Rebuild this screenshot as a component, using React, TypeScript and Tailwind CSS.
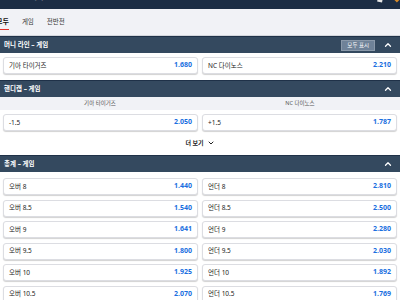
import { ChevronUp, ChevronDown } from 'lucide-react';

const font = { fontFamily: '"Noto Sans", "Noto Sans CJK KR", sans-serif' };

const OddCard = ({ label, odd }: { label: string; odd: string }) => (
  <div className="flex h-[17px] flex-1 items-center justify-between rounded-[3px] border border-[#dcdde2] bg-white px-[5px] shadow-[0_1px_1px_rgba(0,0,0,0.18)]">
    <span className="text-[6.5px] text-[#222]">{label}</span>
    <span className="text-[7px] font-bold text-[#1a6fe0]">{odd}</span>
  </div>
);

const SectionHeader = ({ title, showAll }: { title: string; showAll?: boolean }) => (
  <div className="flex h-[17px] items-center justify-between border-t border-[#1f3148] bg-[#34495f] pl-[4px] pr-[7px]">
    <span className="text-[6.5px] font-bold text-white">{title}</span>
    <div className="flex items-center gap-[8px]">
      {showAll && (
        <span className="flex h-[11px] items-center border border-[#8a99aa] bg-[#6f8298] px-[5px] text-[5.5px] text-white">
          모두 표시
        </span>
      )}
      <ChevronUp size={10} strokeWidth={3} className="text-white" />
    </div>
  </div>
);

const totals = [
  ['오버 8', '1.440', '언더 8', '2.810'],
  ['오버 8.5', '1.540', '언더 8.5', '2.500'],
  ['오버 9', '1.641', '언더 9', '2.280'],
  ['오버 9.5', '1.800', '언더 9.5', '2.030'],
  ['오버 10', '1.925', '언더 10', '1.892'],
  ['오버 10.5', '2.070', '언더 10.5', '1.769'],
];

export default function App() {
  return (
    <div className="h-[300px] w-[400px] overflow-hidden bg-white" style={font}>
      {/* top bar, scrolled partly out of view */}
      <div className="-mt-[14px] flex h-[23px] items-center justify-between bg-[#1c2d45] pl-[8px] pr-[2px]">
        <span className="text-[7px] font-bold text-white">☆ &nbsp;NC 다이노스</span>
        <div className="flex items-center gap-[10px]">
          <div className="h-[9px] w-[5px] rotate-12 bg-[#e6e6e6]" />
          <div className="h-[9px] w-[5px] -rotate-45 bg-[#d58a2a]" />
        </div>
      </div>

      {/* tabs */}
      <div className="flex h-[27px] items-center gap-[13px] border-b border-[#d3d6dc] bg-[#f1f2f6] -ml-[4px]">
        <div className="relative flex h-full items-center">
          <span className="text-[7px] font-bold text-[#111]">모두</span>
          <div className="absolute bottom-[5px] left-0 h-[1.5px] w-full bg-[#e2302a]" />
        </div>
        <span className="text-[6.5px] text-[#333]">게임</span>
        <span className="text-[6.5px] text-[#333]">전반전</span>
      </div>

      <SectionHeader title="머니 라인 – 게임" showAll />
      <div className="flex gap-[4px] bg-white px-[3px] pb-[6px] pt-[4px]">
        <OddCard label="기아 타이거즈" odd="1.680" />
        <OddCard label="NC 다이노스" odd="2.210" />
      </div>

      <SectionHeader title="핸디캡 – 게임" />
      <div className="flex h-[13px] items-center bg-[#f1f2f6]">
        <span className="flex-1 text-center text-[5.5px] text-[#555]">기아 타이거즈</span>
        <span className="flex-1 text-center text-[5.5px] text-[#555]">NC 다이노스</span>
      </div>
      <div className="flex gap-[4px] bg-white px-[3px] pt-[4px]">
        <OddCard label="-1.5" odd="2.050" />
        <OddCard label="+1.5" odd="1.787" />
      </div>
      <div className="flex h-[24px] items-center justify-center gap-[3px]">
        <span className="text-[6px] font-bold text-[#222]">더 보기</span>
        <ChevronDown size={8} strokeWidth={3} className="text-[#222]" />
      </div>

      <SectionHeader title="총계 – 게임" />
      <div className="flex flex-col gap-[4.5px] bg-white px-[3px] pt-[6px]">
        {totals.map(([a, b, c, d]) => (
          <div key={a} className="flex gap-[4px]">
            <OddCard label={a} odd={b} />
            <OddCard label={c} odd={d} />
          </div>
        ))}
      </div>
    </div>
  );
}
